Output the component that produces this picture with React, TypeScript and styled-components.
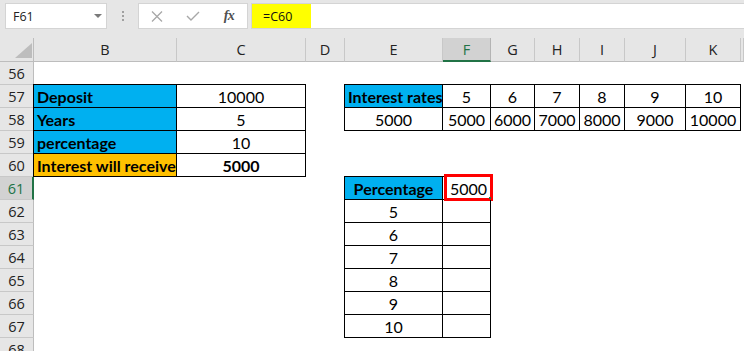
import React from "react";
import styled, { createGlobalStyle, css } from "styled-components";

const BLUE = "#00b0f0";
const ORANGE = "#ffc000";
const GREEN = "#217346";

const GlobalStyle = createGlobalStyle`
  html, body {
    margin: 0;
    padding: 0;
    background: #fff;
    overflow: hidden;
  }
`;

const Window = styled.div`
  width: 744px;
  height: 351px;
  overflow: hidden;
  background: #fff;
  font-family: "Open Sans", "Liberation Sans", sans-serif;
  color: #222;
`;

/* ---------- formula bar ---------- */

const FormulaBar = styled.div`
  display: flex;
  align-items: flex-start;
  height: 38px;
  box-sizing: border-box;
  padding: 3px 0 0 5px;
  background: #e6e6e6;
`;

const NameBox = styled.div`
  display: flex;
  align-items: center;
  justify-content: space-between;
  width: 102px;
  height: 26px;
  box-sizing: border-box;
  padding: 0 4px 0 7px;
  border: 1px solid #d4d4d4;
  background: #fff;
  font-size: 12.5px;
`;

const DropArrow = styled.span`
  width: 0;
  height: 0;
  border-left: 4px solid transparent;
  border-right: 4px solid transparent;
  border-top: 4px solid #7a7a7a;
`;

const Grip = styled.div`
  display: flex;
  flex-direction: column;
  align-items: center;
  justify-content: center;
  gap: 2px;
  width: 31px;
  height: 26px;
`;

const GripDot = styled.span`
  width: 2px;
  height: 2px;
  background: #a0a0a0;
`;

const ButtonBox = styled.div`
  display: flex;
  width: 110px;
  height: 26px;
  box-sizing: border-box;
  border: 1px solid #d4d4d4;
  background: #fff;
`;

const BarButton = styled.div`
  display: flex;
  align-items: center;
  justify-content: center;
  width: 36px;
  height: 100%;
`;

const FxLabel = styled.span`
  font-family: "Liberation Serif", "DejaVu Serif", serif;
  font-style: italic;
  font-weight: 700;
  font-size: 14px;
  color: #505050;
  letter-spacing: -0.5px;
`;

const FormulaInput = styled.div`
  flex: 1;
  display: flex;
  height: 26px;
  margin-left: 3px;
  box-sizing: border-box;
  border: 1px solid #d4d4d4;
  border-right: none;
  background: #fff;
`;

const Highlight = styled.span`
  display: flex;
  align-items: center;
  width: 59px;
  box-sizing: border-box;
  padding-left: 11px;
  background: #ffff00;
  font-size: 12.5px;
  color: #111;
`;

/* ---------- sheet ---------- */

const Sheet = styled.div`
  display: grid;
  grid-template-columns: 34px 143px 129px 39px 98px 48px 44px 45px 45px 61px 55px 1fr;
  grid-template-rows: 24px;
  grid-auto-rows: 23px;
`;

const Corner = styled.div`
  display: flex;
  align-items: flex-end;
  justify-content: flex-end;
  padding: 0 1px 3px 0;
  box-sizing: border-box;
  background: #e6e6e6;
  border-right: 1px solid #bdbdbd;
  border-bottom: 1px solid #bdbdbd;
`;

const CornerMark = styled.span`
  width: 0;
  height: 0;
  border-left: 17px solid transparent;
  border-bottom: 15px solid #bdbdbd;
`;

const ColHead = styled.div<{ $selected?: boolean }>`
  display: flex;
  align-items: center;
  justify-content: center;
  box-sizing: border-box;
  font-size: 14.5px;
  background: #e6e6e6;
  border-right: 1px solid #c8c8c8;
  border-bottom: 1px solid #bdbdbd;
  ${(p) =>
    p.$selected &&
    css`
      background: #d2d2d2;
      color: ${GREEN};
      border-right-color: #b4b4b4;
      border-bottom: 2px solid ${GREEN};
    `}
`;

const RowHead = styled.div<{ $selected?: boolean }>`
  display: flex;
  align-items: center;
  justify-content: center;
  box-sizing: border-box;
  font-size: 14.5px;
  background: #e6e6e6;
  border-right: 1px solid #bdbdbd;
  border-bottom: 1px solid #c8c8c8;
  ${(p) =>
    p.$selected &&
    css`
      background: #d2d2d2;
      color: ${GREEN};
      border-right: 2px solid ${GREEN};
    `}
`;

type Align = "left" | "center" | "right";

const justify = { left: "flex-start", center: "center", right: "flex-end" };

const Cell = styled.div<{
  $fill?: string;
  $bold?: boolean;
  $align: Align;
  $boxed: boolean;
  $edgeTop: boolean;
  $edgeLeft: boolean;
}>`
  position: relative;
  display: flex;
  align-items: center;
  justify-content: ${(p) => justify[p.$align]};
  min-width: 0;
  padding: 1px 3px 0;
  box-sizing: border-box;
  white-space: nowrap;
  font-family: Lato, "Liberation Sans", sans-serif;
  font-size: 16px;
  font-weight: ${(p) => (p.$bold ? 700 : 400)};
  color: #000;
  background: ${(p) => p.$fill ?? "transparent"};
  ${(p) =>
    p.$boxed &&
    css`
      border-right: 1px solid #000;
      border-bottom: 1px solid #000;
    `}
  box-shadow: ${(p) => {
    const s: string[] = [];
    if (p.$edgeLeft) s.push("-1px 0 0 #000");
    if (p.$edgeTop) s.push("0 -1px 0 #000");
    if (p.$edgeLeft && p.$edgeTop) s.push("-1px -1px 0 #000");
    return s.length ? s.join(", ") : "none";
  }};
`;

const SelectionFrame = styled.span`
  position: absolute;
  left: 1px;
  top: -3px;
  width: 49px;
  height: 27px;
  box-sizing: border-box;
  border: 3px solid #ff0000;
  pointer-events: none;
`;

const FillHandle = styled.span`
  position: absolute;
  right: -1px;
  bottom: -1px;
  width: 2px;
  height: 2px;
  background: ${GREEN};
`;

const CellText = styled.span`
  position: relative;
  z-index: 1;
`;

type CellData = { v: string; fill?: string; bold?: boolean; align?: Align };

const data: Record<string, CellData> = {
  B57: { v: "Deposit", fill: BLUE, bold: true, align: "left" },
  C57: { v: "10000" },
  B58: { v: "Years", fill: BLUE, bold: true, align: "left" },
  C58: { v: "5" },
  B59: { v: "percentage", fill: BLUE, bold: true, align: "left" },
  C59: { v: "10" },
  B60: { v: "Interest will receive", fill: ORANGE, bold: true, align: "left" },
  C60: { v: "5000", bold: true },

  E57: { v: "Interest rates", fill: BLUE, bold: true, align: "left" },
  F57: { v: "5" },
  G57: { v: "6" },
  H57: { v: "7" },
  I57: { v: "8" },
  J57: { v: "9" },
  K57: { v: "10" },
  E58: { v: "5000" },
  F58: { v: "5000" },
  G58: { v: "6000" },
  H58: { v: "7000" },
  I58: { v: "8000" },
  J58: { v: "9000" },
  K58: { v: "10000" },

  E61: { v: "Percentage", fill: BLUE, bold: true },
  F61: { v: "5000", align: "right" },
};

[5, 6, 7, 8, 9, 10].forEach((n, i) => {
  data[`E${62 + i}`] = { v: String(n) };
  data[`F${62 + i}`] = { v: "" };
});

const cols = ["B", "C", "D", "E", "F", "G", "H", "I", "J", "K"];
const rows = Array.from({ length: 13 }, (_, i) => 56 + i);
const activeCol = "F";
const activeRow = 61;

const prevCol = (c: string) => String.fromCharCode(c.charCodeAt(0) - 1);

const CloseIcon = () => (
  <svg width="12" height="11" viewBox="0 0 12 11">
    <path d="M1 0.5 L11 10.5 M11 0.5 L1 10.5" stroke="#a8a8a8" strokeWidth="1.3" fill="none" />
  </svg>
);

const CheckIcon = () => (
  <svg width="14" height="10" viewBox="0 0 14 10">
    <path d="M1 5 L5 9 L13 1" stroke="#a8a8a8" strokeWidth="1.4" fill="none" />
  </svg>
);

const App = () => {
  return (
    <>
      <GlobalStyle />
      <Window>
        <FormulaBar>
          <NameBox>
            <span>F61</span>
            <DropArrow />
          </NameBox>
          <Grip>
            <GripDot />
            <GripDot />
            <GripDot />
          </Grip>
          <ButtonBox>
            <BarButton>
              <CloseIcon />
            </BarButton>
            <BarButton>
              <CheckIcon />
            </BarButton>
            <BarButton>
              <FxLabel>fx</FxLabel>
            </BarButton>
          </ButtonBox>
          <FormulaInput>
            <Highlight>=C60</Highlight>
          </FormulaInput>
        </FormulaBar>

        <Sheet>
          <Corner>
            <CornerMark />
          </Corner>
          {cols.map((c) => (
            <ColHead key={c} $selected={c === activeCol}>
              {c}
            </ColHead>
          ))}
          <ColHead />

          {rows.map((r) => (
            <React.Fragment key={r}>
              <RowHead $selected={r === activeRow}>{r}</RowHead>
              {cols.map((c) => {
                const id = `${c}${r}`;
                const d = data[id];
                const boxed = !!d;
                const active = c === activeCol && r === activeRow;
                return (
                  <Cell
                    key={id}
                    $fill={d?.fill}
                    $bold={d?.bold}
                    $align={d?.align ?? "center"}
                    $boxed={boxed}
                    $edgeTop={boxed && !data[`${c}${r - 1}`]}
                    $edgeLeft={boxed && !data[`${prevCol(c)}${r}`]}
                  >
                    {d?.v && <CellText>{d.v}</CellText>}
                    {active && (
                      <SelectionFrame>
                        <FillHandle />
                      </SelectionFrame>
                    )}
                  </Cell>
                );
              })}
              <div />
            </React.Fragment>
          ))}
        </Sheet>
      </Window>
    </>
  );
};

export default App;
